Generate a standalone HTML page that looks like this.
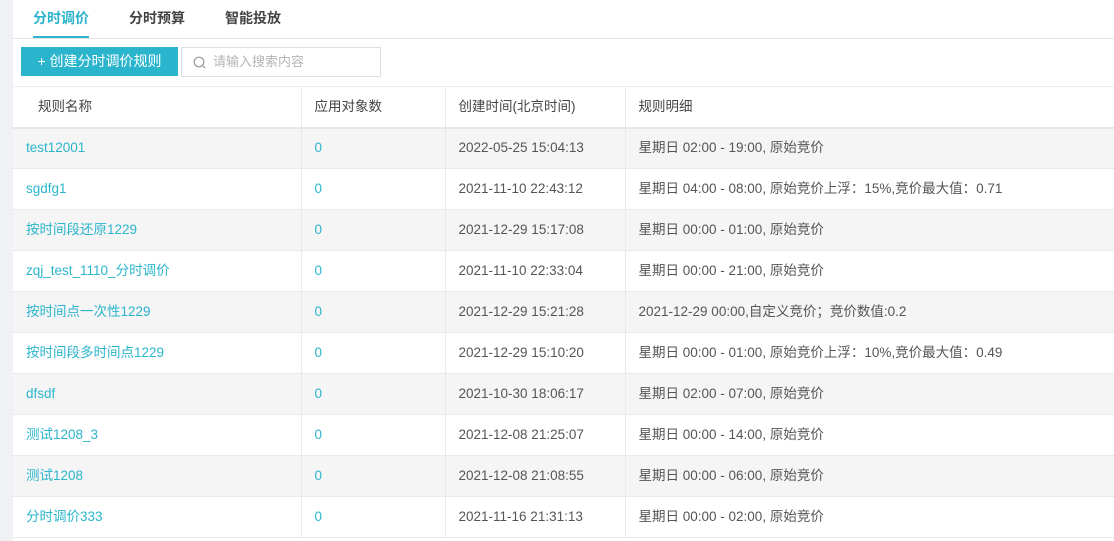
<!DOCTYPE html><html><head><meta charset="utf-8"><style>
*{margin:0;padding:0;box-sizing:border-box}
body{width:1114px;height:541px;overflow:hidden;background:#fff;font-family:"Liberation Sans","Noto Sans CJK SC",sans-serif;font-size:13.5px;color:#555;position:relative}
.strip{position:absolute;left:0;top:0;width:13px;height:541px;background:#f0f1f4}
.tabs{position:absolute;left:13px;top:0;right:0;height:39px;border-bottom:1px solid #e6e6e6}
.tab{position:absolute;top:8px;font-size:14px;font-weight:bold;color:#444}
.tab.a{color:#2bb5cc}
.ul{position:absolute;left:33px;top:36px;width:56px;height:2px;background:#2bb5cc}
.btn{position:absolute;left:21px;top:47px;width:157px;height:29px;background:#2bb5cc;color:#fff;font-size:14px;line-height:29px;text-align:center}
.srch{position:absolute;left:181px;top:47px;width:200px;height:30px;border:1px solid #dcdfe6;color:#b4b4b4;font-size:13px;line-height:28px;padding-left:31px}
.srch svg{position:absolute;left:11px;top:8px}
table{position:absolute;left:13px;top:86px;width:1101px;border-collapse:collapse}
td,th{height:41px;line-height:20px;border-bottom:1px solid #e9e9e9;border-right:1px solid #e9e9e9;padding-left:13px;text-align:left;font-weight:normal;white-space:nowrap;vertical-align:middle}
th{height:41px;border-top:1px solid #eee;border-bottom:2px solid #e6e6e6;color:#444}
th:first-child{padding-left:25px}
td:last-child,th:last-child{border-right:none}
tr.g td{background:#f5f5f5}
td.l{color:#2bb5cc}
td span{vertical-align:top}
</style></head><body>
<div class="strip"></div>
<div class="tabs"></div>
<div class="tab a" style="left:33px">分时调价</div>
<div class="tab" style="left:129px">分时预算</div>
<div class="tab" style="left:225px">智能投放</div>
<div class="ul"></div>
<div class="btn">+ 创建分时调价规则</div>
<div class="srch"><svg width="13" height="13" viewBox="0 0 13 13"><circle cx="6" cy="6" r="4.8" fill="none" stroke="#999" stroke-width="1.2"/><path d="M9.5 9.5L12 12" stroke="#999" stroke-width="1.2"/></svg>请输入搜索内容</div>
<table>
<colgroup><col style="width:288px"><col style="width:144px"><col style="width:180px"><col></colgroup>
<tr><th>规则名称</th><th>应用对象数</th><th>创建时间(北京时间)</th><th>规则明细</th></tr>
<tr class="g"><td class="l">test12001</td><td class="l">0</td><td>2022-05-25 15:04:13</td><td>星期日 02:00 - 19:00, 原始竞价</td></tr>
<tr><td class="l">sgdfg1</td><td class="l">0</td><td>2021-11-10 22:43:12</td><td>星期日 04:00 - 08:00, 原始竞价上浮：15%,竞价最大值：0.71</td></tr>
<tr class="g"><td class="l">按时间段还原1229</td><td class="l">0</td><td>2021-12-29 15:17:08</td><td>星期日 00:00 - 01:00, 原始竞价</td></tr>
<tr><td class="l">zqj_test_1110_分时调价</td><td class="l">0</td><td>2021-11-10 22:33:04</td><td>星期日 00:00 - 21:00, 原始竞价</td></tr>
<tr class="g"><td class="l">按时间点一次性1229</td><td class="l">0</td><td>2021-12-29 15:21:28</td><td>2021-12-29 00:00,自定义竞价；竞价数值:0.2</td></tr>
<tr><td class="l">按时间段多时间点1229</td><td class="l">0</td><td>2021-12-29 15:10:20</td><td>星期日 00:00 - 01:00, 原始竞价上浮：10%,竞价最大值：0.49</td></tr>
<tr class="g"><td class="l">dfsdf</td><td class="l">0</td><td>2021-10-30 18:06:17</td><td>星期日 02:00 - 07:00, 原始竞价</td></tr>
<tr><td class="l">测试1208_3</td><td class="l">0</td><td>2021-12-08 21:25:07</td><td>星期日 00:00 - 14:00, 原始竞价</td></tr>
<tr class="g"><td class="l">测试1208</td><td class="l">0</td><td>2021-12-08 21:08:55</td><td>星期日 00:00 - 06:00, 原始竞价</td></tr>
<tr><td class="l">分时调价333</td><td class="l">0</td><td>2021-11-16 21:31:13</td><td>星期日 00:00 - 02:00, 原始竞价</td></tr>
</table>
</body></html>
